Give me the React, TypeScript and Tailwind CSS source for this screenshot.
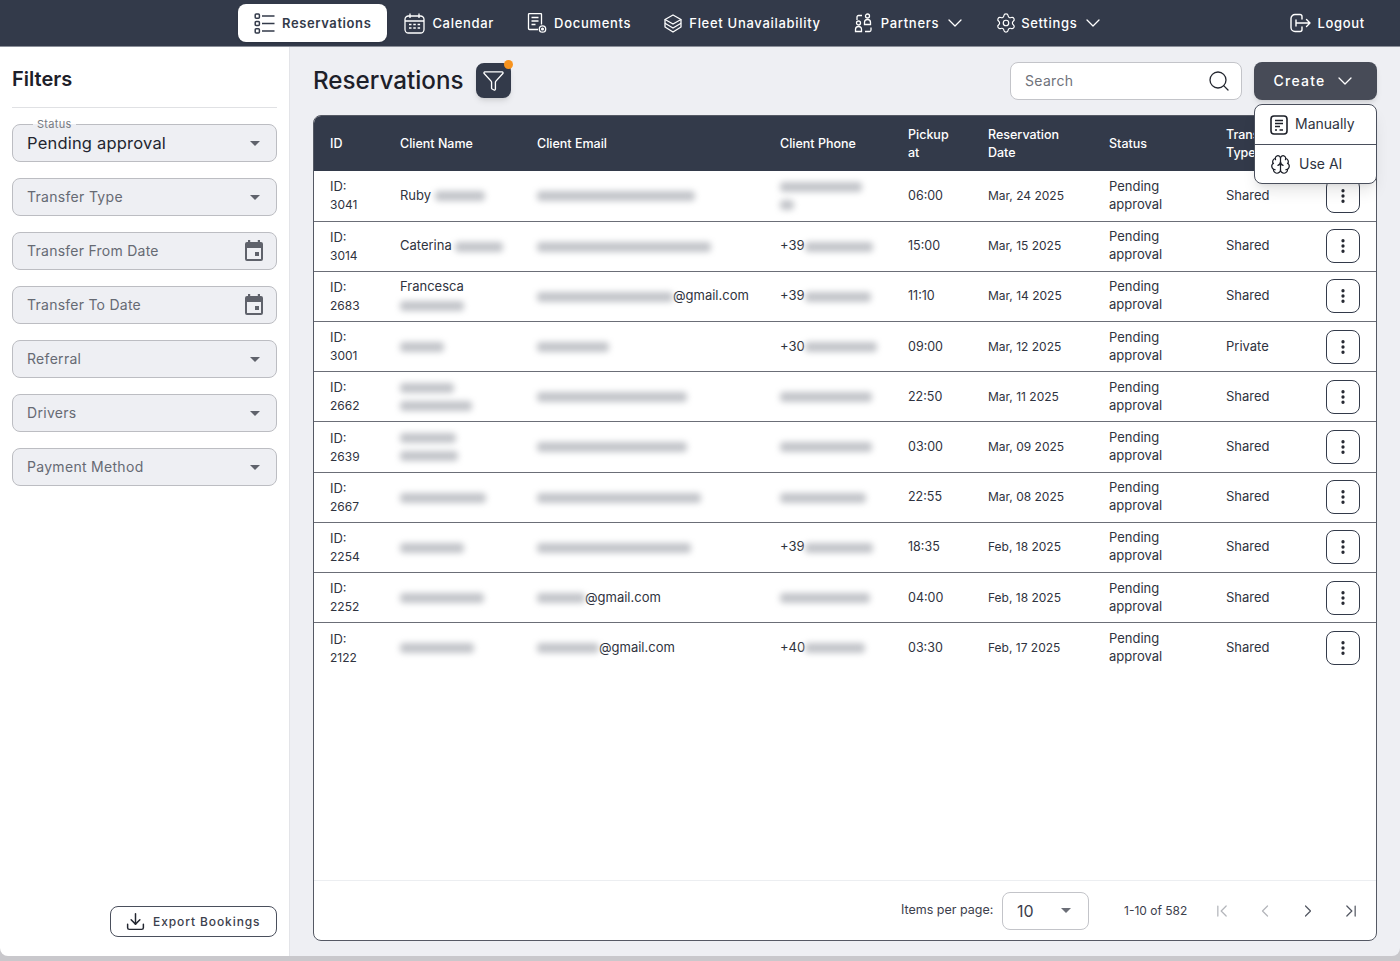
import React from "react";
import {
  Brain,
  ChevronDown,
  ChevronFirst,
  ChevronLast,
  ChevronLeft,
  ChevronRight,
  Download,
  EllipsisVertical,
  Funnel,
  Search,
  Settings,
} from "lucide-react";

type Row = {
  id: string;
  name: React.ReactNode;
  email: React.ReactNode;
  phone: React.ReactNode;
  time: string;
  date: string;
  type?: string;
};

function Blur({ w, className = "" }: { w: number; className?: string }) {
  return (
    <span
      className={`inline-block h-[10px] rounded-sm bg-[#c2c4c9] blur-[3px] align-middle ${className}`}
      style={{ width: w }}
    />
  );
}

const rows: Row[] = [
  { id: "3041", name: <>Ruby <Blur w={50} /></>, email: <Blur w={158} />, phone: <><Blur w={82} /><br /><Blur w={14} /></>, time: "06:00", date: "Mar, 24 2025" },
  { id: "3014", name: <>Caterina <Blur w={48} /></>, email: <Blur w={174} />, phone: <>+39<Blur w={68} /></>, time: "15:00", date: "Mar, 15 2025" },
  { id: "2683", name: <>Francesca<br /><Blur w={64} /></>, email: <><Blur w={136} />@gmail.com</>, phone: <>+39<Blur w={66} /></>, time: "11:10", date: "Mar, 14 2025" },
  { id: "3001", name: <Blur w={44} />, email: <Blur w={72} />, phone: <>+30<Blur w={72} /></>, time: "09:00", date: "Mar, 12 2025", type: "Private" },
  { id: "2662", name: <><Blur w={54} /><br /><Blur w={72} /></>, email: <Blur w={150} />, phone: <Blur w={92} />, time: "22:50", date: "Mar, 11 2025" },
  { id: "2639", name: <><Blur w={56} /><br /><Blur w={58} /></>, email: <Blur w={150} />, phone: <Blur w={92} />, time: "03:00", date: "Mar, 09 2025" },
  { id: "2667", name: <Blur w={86} />, email: <Blur w={164} />, phone: <Blur w={86} />, time: "22:55", date: "Mar, 08 2025" },
  { id: "2254", name: <Blur w={64} />, email: <Blur w={154} />, phone: <>+39<Blur w={68} /></>, time: "18:35", date: "Feb, 18 2025" },
  { id: "2252", name: <Blur w={84} />, email: <><Blur w={48} />@gmail.com</>, phone: <Blur w={90} />, time: "04:00", date: "Feb, 18 2025" },
  { id: "2122", name: <Blur w={74} />, email: <><Blur w={62} />@gmail.com</>, phone: <>+40<Blur w={60} /></>, time: "03:30", date: "Feb, 17 2025" },
];

function ListIcon() {
  return (
    <svg width="21" height="21" viewBox="0 0 21 21" fill="none" stroke="#333a4a" strokeWidth="1.5">
      <rect x="1.200" y="1" width="4.200" height="4.200" rx="1" />
      <rect x="1.200" y="8.400" width="4.200" height="4.200" rx="1" />
      <rect x="1.200" y="15.800" width="4.200" height="4.200" rx="1" />
      <path d="M8 3h12.500M8 10.500h12.500M8 18h12.500" />
    </svg>
  );
}

function CalendarIcon() {
  return (
    <svg width="21" height="21" viewBox="0 0 21 21" fill="none" stroke="#fff" strokeWidth="1.3">
      <rect x="1" y="3" width="19" height="17" rx="3.500" />
      <path d="M1 8h19M6 0.500v4.500M15 0.500v4.500" />
      <path d="M5 11.500h2.500M9.300 11.500h2.500M13.600 11.500h2.500M5 15h2.500M9.300 15h2.500M13.600 15h2.500" strokeWidth="1.600" />
    </svg>
  );
}

function DocumentIcon() {
  return (
    <svg width="20" height="20" viewBox="0 0 20 20" fill="none" stroke="#fff" strokeWidth="1.3">
      <path d="M11 16.500H2.500a1 1 0 0 1-1-1V1.500a1 1 0 0 1 1-1h11a1 1 0 0 1 1 1v10" />
      <path d="M4.500 4.500h7M4.500 8h7M4.500 11.500h4" />
      <circle cx="15.500" cy="16" r="3.200" />
      <circle cx="15.500" cy="16" r="0.900" fill="#fff" />
    </svg>
  );
}

function StackIcon() {
  return (
    <svg width="18" height="19" viewBox="0 0 18 19" fill="none" stroke="#fff" strokeWidth="1.300" strokeLinejoin="round">
      <path d="M9 1l8 4.500L9 10 1 5.500z" />
      <path d="M1 5.500v7.500l8 5 8-5V5.500" />
      <path d="M1 9.300l8 4.700 8-4.700" />
    </svg>
  );
}

function PartnersIcon() {
  return (
    <svg width="20" height="20" viewBox="0 0 20 20" fill="none" stroke="#fff" strokeWidth="1.300">
      <circle cx="13.500" cy="3" r="2" />
      <path d="M10.500 11.500V9.500a3 3 0 0 1 6 0v2z" />
      <circle cx="4.500" cy="10" r="2" />
      <path d="M1.500 18.500v-2a3 3 0 0 1 6 0v2z" />
      <path d="M3 7V4a1.500 1.500 0 0 1 1.500-1.500H8M17 14.500V17a1.500 1.500 0 0 1-1.500 1.500H11" />
    </svg>
  );
}

function LogoutIcon() {
  return (
    <svg width="21" height="20" viewBox="0 0 21 20" fill="none" stroke="#fff" strokeWidth="1.400" strokeLinecap="round" strokeLinejoin="round">
      <path d="M12 6V3.500a2 2 0 0 0-2-2H5a4 4 0 0 0-4 4v9a4 4 0 0 0 4 4h5a2 2 0 0 0 2-2V14" />
      <path d="M6 7v6M6 10h14M16.500 6.500L20 10l-3.500 3.500" />
    </svg>
  );
}

function ManualIcon() {
  return (
    <svg width="18" height="20" viewBox="0 0 18 20" fill="none" stroke="#1d2029" strokeWidth="1.600">
      <rect x="1" y="1" width="16" height="18" rx="3" />
      <path d="M5 5.500h8M5 8.500h8M5 11.500h5M5 15h2M9.500 15h3.500" strokeWidth="1.400" />
    </svg>
  );
}

function NavItem({ icon, label, chevron }: { icon: React.ReactNode; label: string; chevron?: boolean }) {
  return (
    <div className="flex h-[38px] items-center gap-[7px] rounded-lg px-4 text-[13px] font-medium tracking-[0.7px] text-white">
      {icon}
      <span className="mt-[2px]">{label}</span>
      {chevron && <ChevronDown size={24} strokeWidth={1.3} className="-ml-[3px] -mr-[4px]" />}
    </div>
  );
}

function SelectField({ label }: { label: string }) {
  return (
    <div className="flex h-[38px] items-center justify-between rounded-lg border border-[#bcbdc2] bg-[#eeeff3] pb-[2px] pl-[14px] pr-[16px] text-[14px] tracking-[0.3px] text-[#666a73]">
      <span>{label}</span>
      <span className="mt-[2px] h-0 w-0 border-x-[5px] border-t-[5px] border-x-transparent border-t-[#5f626b]" />
    </div>
  );
}

function DateField({ label }: { label: string }) {
  return (
    <div className="flex h-[38px] items-center justify-between rounded-lg border border-[#bcbdc2] bg-[#eeeff3] pl-[14px] pr-[12px] text-[14px] tracking-[0.25px] text-[#666a73]">
      <span className="mb-[2px]">{label}</span>
      <svg width="20" height="22" viewBox="0 0 20 22" fill="#5f626b">
        <path d="M4 0h2.200v2h7.600V0H16v2h1a2 2 0 0 1 2 2v15a2 2 0 0 1-2 2H3a2 2 0 0 1-2-2V4a2 2 0 0 1 2-2h1zM3 8v11h14V8z" />
        <rect x="11" y="12" width="4" height="4" />
      </svg>
    </div>
  );
}

export default function App() {
  return (
    <div className="h-[961px] w-[1400px] overflow-hidden bg-[#c9c8cc] font-['Inter',sans-serif] text-[#2f3340]">
      <div className="flex h-[956px] flex-col overflow-hidden rounded-b-lg">
        {/* Top nav */}
        <header className="flex h-[47px] shrink-0 items-center justify-between border-b border-[#8b8f99] bg-[#333a4a] pl-[238px] pr-[35px]">
          <nav className="flex items-center gap-[1px]">
            <div className="flex h-[38px] items-center gap-[7px] rounded-lg bg-white px-4 text-[13px] font-semibold tracking-[0.6px] text-[#333a4a] shadow-sm">
              <ListIcon />
              <span className="mt-[2px]">Reservations</span>
            </div>
            <NavItem icon={<CalendarIcon />} label="Calendar" />
            <NavItem icon={<DocumentIcon />} label="Documents" />
            <NavItem icon={<StackIcon />} label="Fleet Unavailability" />
            <NavItem icon={<PartnersIcon />} label="Partners" chevron />
            <NavItem icon={<Settings size={22} strokeWidth={1.3} className="-ml-px -mr-[3px]" />} label="Settings" chevron />
          </nav>
          <div className="flex items-center gap-[6px] text-[13px] font-medium tracking-[0.7px] text-white">
            <LogoutIcon />
            <span className="mt-[2px]">Logout</span>
          </div>
        </header>

        <div className="flex min-h-0 flex-1">
          {/* Filters */}
          <aside className="flex w-[290px] shrink-0 flex-col border-r border-[#e3e4e8] bg-white pl-[12px] pr-[12px]">
            <h2 className="pt-[19px] text-[20px] font-semibold leading-[26px] text-[#1d2029]">Filters</h2>
            <div className="mt-[15px] h-px bg-[#e0e1e4]" />
            <div className="mt-[16px] flex flex-col gap-4">
              <div className="relative flex h-[38px] items-center justify-between rounded-lg border border-[#bcbdc2] bg-[#eeeff3] pl-[14px] pr-[16px] text-[16.500px] tracking-[0.2px] text-[#23262f]">
                <span className="absolute -top-[8px] left-[20px] bg-[linear-gradient(#fff_50%,#eeeff3_50%)] px-[4px] text-[11px] leading-[14px] tracking-[0.3px] text-[#777a82]">Status</span>
                <span className="mt-[1px]">Pending approval</span>
                <span className="h-0 w-0 border-x-[5px] border-t-[5px] border-x-transparent border-t-[#5f626b]" />
              </div>
              <SelectField label="Transfer Type" />
              <DateField label="Transfer From Date" />
              <DateField label="Transfer To Date" />
              <SelectField label="Referral" />
              <SelectField label="Drivers" />
              <SelectField label="Payment Method" />
            </div>
            <div className="mt-auto flex justify-end pb-[19px]">
              <button className="flex h-[31px] w-[167px] items-center gap-[7px] rounded-lg border border-[#4a4f5c] pl-[14px] text-[12px] font-medium tracking-[0.9px] text-[#3c404c]">
                <Download size={21} strokeWidth={1.7} className="text-[#222630]" />
                Export Bookings
              </button>
            </div>
          </aside>

          {/* Main */}
          <main className="relative flex min-w-0 flex-1 flex-col bg-[#eeeff3] pl-[23px] pr-[23px] pt-[15px]">
            <div className="flex h-[38px] items-center justify-between">
              <div className="flex items-center gap-[12px]">
                <h1 className="text-[24.200px] font-medium text-[#1d2029]">Reservations</h1>
                <div className="relative flex h-[35px] w-[35px] items-center justify-center rounded-lg bg-[#333a4a] shadow-md">
                  <Funnel size={23} strokeWidth={1.4} className="text-white" />
                  <span className="absolute -right-[2px] -top-[3px] h-[9px] w-[9px] rounded-full bg-[#f7931e]" />
                </div>
              </div>
              <div className="flex items-center gap-3">
                <div className="flex h-[38px] w-[232px] items-center justify-between rounded-lg border border-[#c3c4c9] bg-white pl-[14px] pr-[10px] text-[14px] tracking-[0.3px] text-[#6f727a]">
                  <span className="mb-[2px]">Search</span>
                  <Search size={24} strokeWidth={1.3} className="text-[#23262f]" />
                </div>
                <button className="flex h-[38px] w-[123px] items-center justify-center gap-[8px] rounded-lg bg-[#474b57] text-[14px] font-medium tracking-[1.2px] text-white shadow-md">
                  <span className="mb-[2px]">Create</span>
                  <ChevronDown size={24} strokeWidth={1.3} />
                </button>
              </div>
            </div>

            {/* Create menu */}
            <div className="absolute right-[23px] top-[57px] z-10 w-[123px] rounded-lg border border-[#4a4f5c] bg-white text-[#2f3340] shadow-lg">
              <div className="flex h-[40px] items-center gap-[7px] border-b border-[#4a4f5c] pl-[15px] text-[14px]">
                <ManualIcon />
                <span className="mb-[2px]">Manually</span>
              </div>
              <div className="flex h-[38px] items-center gap-[8px] pl-[15px] text-[14px]">
                <Brain size={21} strokeWidth={1.4} className="text-[#1d2029]" />
                <span className="mb-[2px]">Use AI</span>
              </div>
            </div>

            {/* Table */}
            <div className="mt-[15px] flex h-[826px] flex-col overflow-hidden rounded-lg border border-[#555964] bg-white">
              <div className="flex-1">
                <table className="w-[1062px] table-fixed border-collapse text-left text-[13px] leading-[18px]">
                  <colgroup>
                    <col className="w-[70px]" />
                    <col className="w-[137px]" />
                    <col className="w-[243px]" />
                    <col className="w-[128px]" />
                    <col className="w-[80px]" />
                    <col className="w-[121px]" />
                    <col className="w-[117px]" />
                    <col className="w-[100px]" />
                    <col className="w-[66px]" />
                  </colgroup>
                  <thead className="bg-[#333a4a] text-[12.500px] text-white">
                    <tr className="h-[55px]">
                      <th className="pl-4 font-medium">ID</th>
                      <th className="pl-4 font-medium">Client Name</th>
                      <th className="pl-4 font-medium">Client Email</th>
                      <th className="pl-4 font-medium">Client Phone</th>
                      <th className="pl-4 font-medium">Pickup<br />at</th>
                      <th className="pl-4 font-medium">Reservation<br />Date</th>
                      <th className="pl-4 font-medium">Status</th>
                      <th className="pl-4 font-medium">Transfer<br />Type</th>
                      <th />
                    </tr>
                  </thead>
                  <tbody>
                    {rows.map((r, i) => (
                      <tr key={r.id} className={`h-[50.2px] ${i < rows.length - 1 ? "border-b border-[#6b6e77]" : ""}`}>
                        <td className="pl-4">ID:<br /><span className="text-[12px]">{r.id}</span></td>
                        <td className="pb-[2px] pl-4">{r.name}</td>
                        <td className="pb-[2px] pl-4">{r.email}</td>
                        <td className="pb-[2px] pl-4">{r.phone}</td>
                        <td className="pl-4 text-[12.500px]">{r.time}</td>
                        <td className="pl-4 text-[12px]">{r.date}</td>
                        <td className="pb-[2px] pl-4">Pending<br />approval</td>
                        <td className="pb-[2px] pl-4">{r.type ?? "Shared"}</td>
                        <td className="pl-4">
                          <div className="flex h-[34px] w-[34px] items-center justify-center rounded-lg border border-[#333a4a]">
                            <EllipsisVertical size={18} strokeWidth={2.4} className="text-[#23262f]" />
                          </div>
                        </td>
                      </tr>
                    ))}
                  </tbody>
                </table>
              </div>

              {/* Pagination */}
              <div className="flex h-[60px] shrink-0 items-center border-t border-[#eceef1] pl-[587px] text-[12.500px] text-[#3c404c]">
                <span className="w-[101px]">Items per page:</span>
                <div className="flex h-[38px] w-[87px] items-center justify-between rounded-lg border border-[#c3c4c9] pl-[14px] pr-[17px] text-[16px] text-[#3c404c]">
                  10
                  <span className="h-0 w-0 border-x-[5px] border-t-[5px] border-x-transparent border-t-[#6b6e77]" />
                </div>
                <span className="ml-[35px] w-[88px] text-[12px]">1-10 of 582</span>
                <div className="flex items-center gap-[23px]">
                  <ChevronFirst size={20} strokeWidth={1.5} className="text-[#b4b6bb]" />
                  <ChevronLeft size={20} strokeWidth={1.5} className="text-[#b4b6bb]" />
                  <ChevronRight size={20} strokeWidth={1.5} className="text-[#555964]" />
                  <ChevronLast size={20} strokeWidth={1.5} className="text-[#555964]" />
                </div>
              </div>
            </div>
          </main>
        </div>
      </div>
    </div>
  );
}
